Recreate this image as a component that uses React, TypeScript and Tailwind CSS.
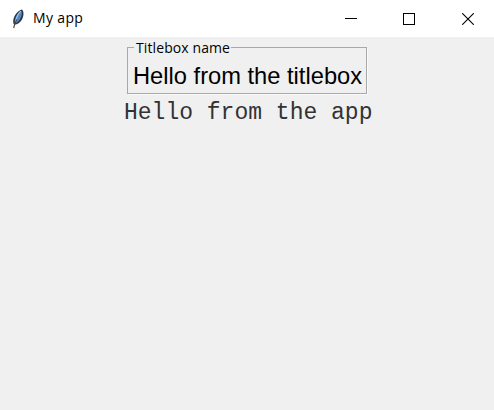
import React from "react";

function Feather() {
  return (
    <svg width="16" height="20" viewBox="0 0 16 20" className="block">
      <path d="M13 0.4C15.2 2.6 14.8 7 13 10.4C11.4 13.3 8.4 15.4 5.2 15.8C3.2 13 4.4 8.4 6.9 5C8.8 2.4 11 0.8 13 0.4Z" fill="#2c3640" />
      <path d="M12.2 1.8C13.6 4.2 12.5 7.6 11 10.2C9.7 12.3 7.9 13.8 5.9 14.4C5.2 11.6 6.4 8 8.3 5.3C9.5 3.5 10.8 2.3 12.2 1.8Z" fill="#4f86c6" />
      <path d="M11.8 2.2C9 5.2 7.1 9.2 6.6 13.2" stroke="#a3c6ec" strokeWidth="1.1" fill="none" />
      <path d="M7.8 10.5C6.4 13 5.2 15.6 4.7 19.2" stroke="#4b4038" strokeWidth="1.1" fill="none" />
    </svg>
  );
}

function TitleBar() {
  return (
    <header className="flex h-[37px] items-center bg-white pl-[9px] pr-[20px]">
      <Feather />
      <h1 className="ml-2 mb-px grow font-['Open_Sans','Noto_Sans',sans-serif] text-[14px] leading-5 tracking-[0.35px] text-black">My app</h1>
      <button aria-label="Minimize" className="mr-[46px]">
        <svg width="12" height="12" shapeRendering="crispEdges" className="block">
          <path d="M0 5.5H12" stroke="#000" />
        </svg>
      </button>
      <button aria-label="Maximize" className="mr-[47px]">
        <svg width="12" height="12" shapeRendering="crispEdges" className="block">
          <rect x="0.5" y="0.5" width="11" height="11" fill="none" stroke="#000" />
        </svg>
      </button>
      <button aria-label="Close">
        <svg width="12" height="12" className="block">
          <path d="M0.2 0.2L11.8 11.8M11.8 0.2L0.2 11.8" stroke="#000" strokeWidth="1.1" />
        </svg>
      </button>
    </header>
  );
}

export default function App() {
  return (
    <div className="flex h-[410px] w-[494px] flex-col bg-[#f0f0f0] text-black">
      <TitleBar />
      <main className="flex flex-col items-start pt-[10px]">
        <section className="relative ml-[127px] h-[47px] w-[240px] border border-[#a8a8a8] pl-[5px] pt-[14px] shadow-[1px_1px_0_#fafafa]">
          <h2 className="absolute -top-[10px] left-[6px] bg-[#f0f0f0] pl-[2px] pr-px font-['Open_Sans','Noto_Sans',sans-serif] text-[14px] leading-[20px] tracking-[0.1px] whitespace-nowrap">
            Titlebox name
          </h2>
          <p className="font-['Liberation_Sans',Arial,sans-serif] text-[23.7px] leading-[28px] whitespace-nowrap">Hello from the titlebox</p>
        </section>
        <p className="ml-[124px] mt-[5px] font-['Courier_New','Liberation_Mono',monospace] text-[23px] leading-[28px] whitespace-nowrap text-[#333]">
          Hello from the app
        </p>
      </main>
    </div>
  );
}
